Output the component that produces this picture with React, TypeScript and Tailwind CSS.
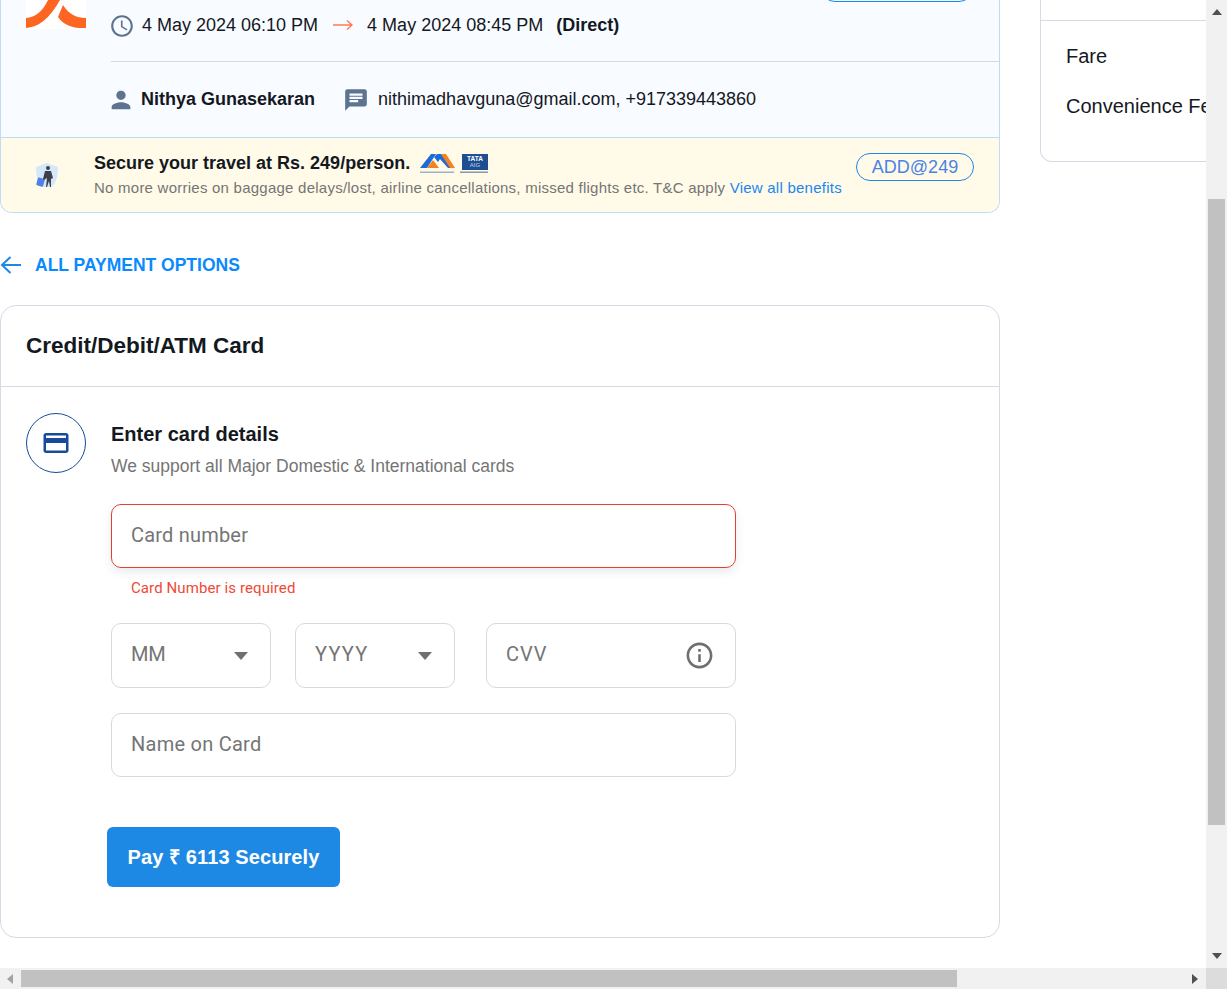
import React from "react";

const Icon = ({ d, className }: { d: string; className?: string }) => (
  <svg viewBox="0 0 24 24" className={className} fill="currentColor"><path d={d} /></svg>
);

const Caret = () => (
  <svg viewBox="0 0 16 8" className="w-[16px] h-[8px] text-[#6f6f6f]" fill="currentColor"><path d="M1 0h14L8 8z" /></svg>
);

const SelectBox = ({ label, track }: { label: string; track: string }) => (
  <div className="w-[160px] h-[65px] border border-[#d9d9d9] rounded-[10px] flex items-center justify-between pl-[19px] pr-[21px] text-[20px] text-[#757575] font-['Roboto',sans-serif]">
    <span className={track + " -mt-[4px]"}>{label}</span>
    <Caret />
  </div>
);

export default function App() {
  return (
    <div className="w-[1227px] h-[989px] overflow-hidden flex flex-col bg-white font-['Liberation_Sans',Arial,sans-serif] text-[#14181f]">
      <div className="flex h-[968px]">
        <div className="w-[1206px] flex gap-[40px] overflow-hidden">
          <div className="w-[1000px] shrink-0 flex flex-col">
            {/* Booking summary */}
            <div className="border-x border-b border-[#bfdcf5] rounded-b-[12px] overflow-hidden h-[213px] flex flex-col bg-[#f8fbff]">
              <div className="flex">
                <div className="w-[110px] pl-[25px] shrink-0">
                  <div className="w-[60px] h-[29px] bg-white overflow-hidden">
                    <svg viewBox="0 0 60 29" className="w-[60px] h-[29px]">
                      <path d="M0 18Q14 17 22 0H34Q19 27 0 28z" fill="#fd6622" />
                      <path d="M37 5Q45 18 60 18V28Q40 29 32 17z" fill="#fd6622" />
                    </svg>
                  </div>
                </div>
                <div className="flex-1 min-w-0 flex flex-col">
                  <div className="h-[62px] border-b border-[#d5dae5] flex items-start">
                    <div className="flex items-center text-[18px] h-[50px]">
                      <Icon className="w-[26px] h-[26px] text-[#5d7390] -ml-[2px] mr-[7px] mt-[2px]" d="M11.990 2C6.470 2 2 6.480 2 12s4.470 10 9.990 10C17.520 22 22 17.520 22 12S17.520 2 11.990 2zM12 20c-4.420 0-8-3.580-8-8s3.580-8 8-8 8 3.580 8 8-3.580 8-8 8zm.5-13H11v6l5.250 3.150.75-1.230-4.500-2.670z" />
                      <span>4 May 2024 06:10 PM</span>
                      <svg viewBox="0 0 20 12" className="w-[20px] h-[12px] ml-[15px] mr-[14px] text-[#ff7a50]" fill="none" stroke="currentColor" strokeWidth="1.4"><path d="M0 6h19M14 1.500 19 6l-5 4.500" /></svg>
                      <span>4 May 2024 08:45 PM</span>
                      <span className="font-bold ml-[13px]">(Direct)</span>
                    </div>
                    <div className="ml-auto mr-[25px] -mt-[28px] w-[154px] h-[30px] border border-[#1e88e5] rounded-full" />
                  </div>
                  <div className="h-[75px] flex items-center text-[18px]">
                    <Icon className="w-[28px] h-[28px] text-[#5d7390] -ml-[4px] mr-[6px]" d="M12 12c2.210 0 4-1.790 4-4s-1.790-4-4-4-4 1.790-4 4 1.790 4 4 4zm0 2c-2.670 0-8 1.340-8 4v2h16v-2c0-2.660-5.330-4-8-4z" />
                    <span className="font-bold">Nithya Gunasekaran</span>
                    <Icon className="w-[26px] h-[26px] text-[#5d7390] ml-[28px] mr-[9px]" d="M20 2H4c-1.100 0-1.990.9-1.990 2L2 22l4-4h14c1.100 0 2-.9 2-2V4c0-1.100-.9-2-2-2zM6 9h12v2H6V9zm8 5H6v-2h8v2zm4-6H6V6h12v2z" />
                    <span>nithimadhavguna@gmail.com, +917339443860</span>
                  </div>
                </div>
              </div>
              {/* Insurance */}
              <div className="flex-1 border-t border-[#bfdcf5] bg-[#fffbe8] flex items-start">
                <div className="w-[93px] shrink-0 pt-[24px] pl-[34px]">
                  <svg viewBox="0 0 24 26" className="w-[24px] h-[26px]">
                    <path d="M12 1 23 5c0 10-2 17-7 20H8C3 22 1 15 1 5z" fill="#d5e8fa" />
                    <rect x="2" y="16" width="7" height="8" rx="1" transform="rotate(15 5 20)" fill="#4f7fe8" />
                    <circle cx="13" cy="6" r="2" fill="#3b3f4e" />
                    <path d="M10 9h6l2 7-2 1v8h-1l-1-6-2 6h-1l1-9-3 2-1-1z" fill="#3b3f4e" />
                  </svg>
                </div>
                <div className="flex-1 pt-[14px]">
                  <div className="flex items-center h-[22px]">
                    <span className="text-[18px] font-bold">Secure your travel at Rs. 249/person.</span>
                    <svg viewBox="0 0 70 21" className="w-[70px] h-[21px] ml-[10px]">
                      <path d="M0 15 11 1h5l-9 14z" fill="#1c6cd8" />
                      <path d="M7 15 13 7l6 8z" fill="#f58220" />
                      <path d="M14 4 17 1h4l8 10 5 4h-6L20 6l-2 3z" fill="#1c6cd8" />
                      <path d="M21 1h5l9 14h-5z" fill="#f58220" />
                      <rect x="42" y="1" width="26" height="16" fill="#1d4f91" />
                      <text x="55" y="8" textAnchor="middle" fontSize="6.500" fontWeight="700" fill="#ffffff" fontFamily="Liberation Sans, sans-serif">TATA</text>
                      <text x="55" y="14" textAnchor="middle" fontSize="6" fill="#c6d6ea" fontFamily="Liberation Sans, sans-serif">AIG</text>
                      <rect x="0" y="18.500" width="34" height="1.500" fill="#9fb1c9" />
                      <rect x="40" y="18.500" width="28" height="1.500" fill="#8a96aa" />
                    </svg>
                  </div>
                  <div className="text-[15px] tracking-[0.24px] text-[#757575] mt-[3px] whitespace-nowrap">
                    No more worries on baggage delays/lost, airline cancellations, missed flights etc. T&amp;C apply <span className="text-[#1a87f0]">View all benefits</span>
                  </div>
                </div>
                <div className="mr-[25px] mt-[15px] w-[118px] h-[28px] border border-[#1e88e5] rounded-full flex items-center justify-center text-[18px] text-[#4a83e6]">ADD@249</div>
              </div>
            </div>

            {/* Back link */}
            <div className="h-[92px] flex items-center pt-[12px] text-[#0a8afd]">
              <svg viewBox="0 0 21 20" className="w-[21px] h-[20px] text-[#1e88e5]" fill="none" stroke="currentColor" strokeWidth="2"><path d="M21 10H2M10.500 2 2 10l8.500 8" /></svg>
              <span className="ml-[14px] text-[17.5px] font-bold">ALL PAYMENT OPTIONS</span>
            </div>

            {/* Card form */}
            <div className="h-[633px] border border-[#d5dae5] rounded-[16px]">
              <div className="h-[81px] border-b border-[#d5dae5] flex items-center pl-[25px] text-[22.5px] font-bold">Credit/Debit/ATM Card</div>
              <div className="flex pl-[25px] pt-[26px]">
                <div className="w-[60px] h-[60px] rounded-full border border-[#164b9d] flex items-center justify-center shrink-0 text-[#164b9d]">
                  <Icon className="w-[30px] h-[30px]" d="M20 4H4c-1.110 0-1.990.89-1.990 2L2 18c0 1.110.89 2 2 2h16c1.110 0 2-.89 2-2V6c0-1.110-.89-2-2-2zm0 14H4v-6h16v6zm0-10H4V6h16v2z" />
                </div>
                <div className="ml-[25px] w-[625px]">
                  <div className="text-[20px] font-bold leading-[24px] mt-[9px] h-[24px]">Enter card details</div>
                  <div className="text-[17.5px] text-[#757575] leading-[24px] mt-[8px]">We support all Major Domestic &amp; International cards</div>
                  <input
                    placeholder="Card number"
                    className="mt-[26px] block w-full h-[64px] border border-[#e53f2e] rounded-[10px] pl-[19px] pb-[2px] text-[20px] tracking-[0.2px] font-['Roboto',sans-serif] placeholder:text-[#757575] shadow-[0_4px_10px_rgba(30,50,90,0.10)] outline-none"
                  />
                  <div className="pl-[20px] mt-[11px] h-[18px] leading-[18px] text-[15px] tracking-[0.1px] text-[#ee4a35] font-['Roboto',sans-serif]">Card Number is required</div>
                  <div className="flex mt-[26px]">
                    <SelectBox label="MM" track="tracking-[-0.3px]" />
                    <div className="ml-[24px]"><SelectBox label="YYYY" track="tracking-[1.2px]" /></div>
                    <div className="ml-[31px] w-[250px] h-[65px] border border-[#d9d9d9] rounded-[10px] flex items-center justify-between pl-[19px] pr-[21px] text-[20px] text-[#757575] font-['Roboto',sans-serif]">
                      <span className="-mt-[4px] tracking-[1px]">CVV</span>
                      <Icon className="w-[31px] h-[31px] text-[#6f6f6f] mr-[-1px]" d="M11 7h2v2h-2zm0 4h2v6h-2zm1-9C6.480 2 2 6.480 2 12s4.480 10 10 10 10-4.480 10-10S17.520 2 12 2zm0 18c-4.410 0-8-3.590-8-8s3.590-8 8-8 8 3.590 8 8-3.590 8-8 8z" />
                    </div>
                  </div>
                  <input
                    placeholder="Name on Card"
                    className="mt-[25px] block w-full h-[64px] border border-[#d9d9d9] rounded-[10px] pl-[19px] pb-[2px] text-[20px] tracking-[0.25px] font-['Roboto',sans-serif] placeholder:text-[#757575] outline-none"
                  />
                  <button className="mt-[50px] -ml-[4px] w-[233px] h-[60px] bg-[#1e88e5] rounded-[6px] text-white text-[20px] tracking-[0.1px] font-bold">Pay ₹ 6113 Securely</button>
                </div>
              </div>
            </div>
          </div>

          {/* Fare summary */}
          <div className="w-[300px] shrink-0">
            <div className="h-[162px] border-x border-b border-[#d5dae5] rounded-b-[12px]">
              <div className="h-[21px] border-b border-[#d5dae5]" />
              <div className="pl-[25px] text-[20px] text-[#14181f]">
                <div className="mt-[23px] leading-[24px]">Fare</div>
                <div className="mt-[26px] leading-[24px] whitespace-nowrap">Convenience Fee</div>
              </div>
            </div>
          </div>
        </div>

        {/* Vertical scrollbar */}
        <div className="w-[21px] bg-[#f1f1f1] flex flex-col items-center">
          <svg viewBox="0 0 10 6" className="w-[10px] h-[6px] mt-[9px] text-[#505050]" fill="currentColor"><path d="M5 0l5 6H0z" /></svg>
          <div className="w-[17px] h-[626px] bg-[#c1c1c1] mt-[184px]" />
          <svg viewBox="0 0 10 6" className="w-[10px] h-[6px] mt-[128px] text-[#505050]" fill="currentColor"><path d="M5 6l5-6H0z" /></svg>
        </div>
      </div>

      {/* Horizontal scrollbar */}
      <div className="h-[21px] flex bg-[#f1f1f1]">
        <div className="w-[1206px] flex items-center">
          <svg viewBox="0 0 6 10" className="w-[6px] h-[10px] ml-[7px] text-[#a3a3a3]" fill="currentColor"><path d="M0 5l6-5v10z" /></svg>
          <div className="w-[936px] h-[17px] bg-[#c1c1c1] ml-[8px]" />
          <svg viewBox="0 0 6 10" className="w-[6px] h-[10px] ml-[235px] text-[#505050]" fill="currentColor"><path d="M6 5L0 0v10z" /></svg>
        </div>
        <div className="w-[21px] bg-[#dcdcdc]" />
      </div>
    </div>
  );
}
